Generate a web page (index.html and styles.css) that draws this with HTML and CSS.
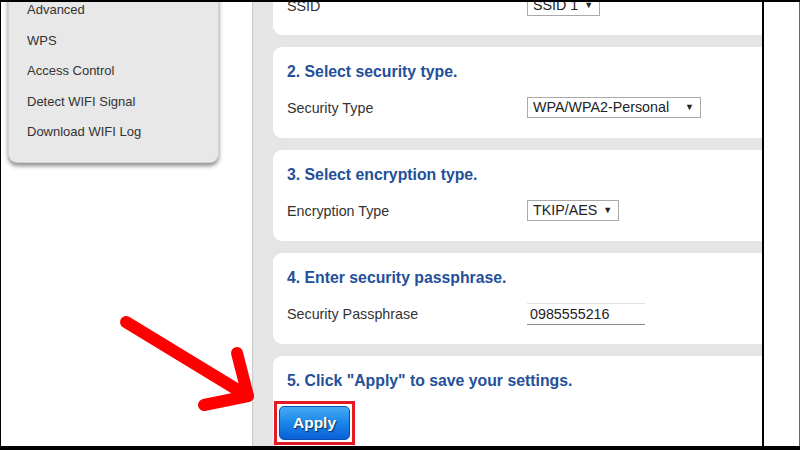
FILE: index.html
```html
<!DOCTYPE html>
<html lang="en">
  <head>
    <meta charset="UTF-8" />
    <meta name="viewport" content="width=device-width, initial-scale=1.0" />
    <title>WiFi Security Settings</title>
    <link rel="stylesheet" href="styles.css">
  </head>
  <body>
    <div class="screen">
      <div class="side">
        <ul class="menu">
          <li>Advanced</li>
          <li>WPS</li>
          <li>Access Control</li>
          <li>Detect WIFI Signal</li>
          <li>Download WIFI Log</li>
        </ul>
      </div>

      <div class="main">
        <div class="card card-first">
          <div class="row">
            <span class="label">SSID</span>
            <span class="select">SSID 1 <i>&#9660;</i></span>
          </div>
        </div>

        <div class="card">
          <h3>2. Select security type.</h3>
          <div class="row">
            <span class="label">Security Type</span>
            <span class="select select-wide">WPA/WPA2-Personal <i>&#9660;</i></span>
          </div>
        </div>

        <div class="card">
          <h3>3. Select encryption type.</h3>
          <div class="row">
            <span class="label">Encryption Type</span>
            <span class="select">TKIP/AES <i>&#9660;</i></span>
          </div>
        </div>

        <div class="card">
          <h3>4. Enter security passphrase.</h3>
          <div class="row">
            <span class="label">Security Passphrase</span>
            <span class="input">0985555216</span>
          </div>
        </div>

        <div class="card">
          <h3>5. Click "Apply" to save your settings.</h3>
          <div class="highlight">
            <button class="apply-btn">Apply</button>
          </div>
        </div>
      </div>

      <div class="rest"></div>

      <svg class="arrow" width="800" height="450" viewBox="0 0 800 450">
        <g stroke="#ff0000" stroke-width="12" stroke-linecap="round" fill="none">
          <line x1="126" y1="322" x2="246" y2="395" />
          <line x1="237" y1="353" x2="248" y2="396" />
          <line x1="204" y1="405" x2="248" y2="396" />
        </g>
      </svg>
    </div>
  </body>
</html>
```

FILE: styles.css
```css
body {
  margin: 0;
  font-family: "Liberation Sans", Arial, sans-serif;
  background: #fff;
}
.screen {
  position: relative;
  width: 800px;
  height: 450px;
  box-sizing: border-box;
  border-top: 2px solid #000;
  border-left: 1px solid #000;
  border-bottom: 4px solid #000;
  display: flex;
  overflow: hidden;
}
.side {
  width: 251px;
  flex-shrink: 0;
  background: #fff;
}
.menu {
  list-style: none;
  margin: -7px 0 0 7px;
  padding: 0 0 14px 18px;
  width: 191px;
  background: #e8e8e8;
  border: 1px solid #d2d2d2;
  border-top: none;
  border-radius: 0 0 9px 9px;
  box-shadow: 0 3px 4px rgba(0, 0, 0, 0.45);
}
.menu li {
  font-size: 13px;
  line-height: 30.5px;
  color: #333;
}
.main {
  width: 489px;
  flex-shrink: 0;
  background: #e5e5e5;
  border-left: 1px solid #c9c9c9;
  border-right: 2px solid #000;
  padding-left: 20px;
  overflow: hidden;
}
.card {
  width: 520px;
  height: 91px;
  margin-bottom: 12px;
  padding: 15px 14px 19px;
  background: #fff;
  border-radius: 9px;
  box-sizing: border-box;
}
.card-first {
  height: auto;
  margin-top: -17px;
  padding-top: 10px;
}
.card h3 {
  margin: 0 0 15px;
  font-size: 15.8px;
  line-height: 20px;
  font-weight: bold;
  color: #24509a;
}
.row {
  display: grid;
  grid-template-columns: 240px auto;
  align-items: center;
  height: 21px;
}
.label {
  font-size: 14.3px;
  color: #333;
}
.select {
  justify-self: start;
  height: 21px;
  box-sizing: border-box;
  padding: 0 6px 0 5px;
  border: 1px solid #a9a9a9;
  font-size: 14.3px;
  line-height: 19px;
  color: #222;
  background: #fff;
}
.select i {
  font-style: normal;
  font-size: 9px;
  vertical-align: 2px;
  margin-left: 2px;
}
.select-wide {
  width: 174px;
  display: flex;
  justify-content: space-between;
}
.input {
  justify-self: start;
  width: 118px;
  height: 22px;
  box-sizing: border-box;
  padding-left: 3px;
  border-top: 1px solid #e2e2e2;
  border-bottom: 1px solid #8c8c8c;
  font-size: 14.3px;
  line-height: 20px;
  color: #222;
}
.highlight {
  display: inline-block;
  margin: -5px 0 0 -13px;
  padding: 2px;
  border: 3px solid #e31a23;
}
.apply-btn {
  display: block;
  width: 71px;
  height: 34px;
  padding: 0;
  border: 1px solid #0a4fb8;
  border-radius: 5px;
  background: linear-gradient(#46aaf2, #1a86ea 50%, #0b5fd6);
  color: #fff;
  font-family: "Liberation Sans", Arial, sans-serif;
  font-size: 15.5px;
  font-weight: bold;
  text-shadow: 1px 1px 1px rgba(0, 0, 0, 0.6);
}
.rest {
  flex: 1;
  background: #fff;
  border-right: 1px solid #666;
}
.arrow {
  position: absolute;
  left: -1px;
  top: -2px;
  pointer-events: none;
}
```
